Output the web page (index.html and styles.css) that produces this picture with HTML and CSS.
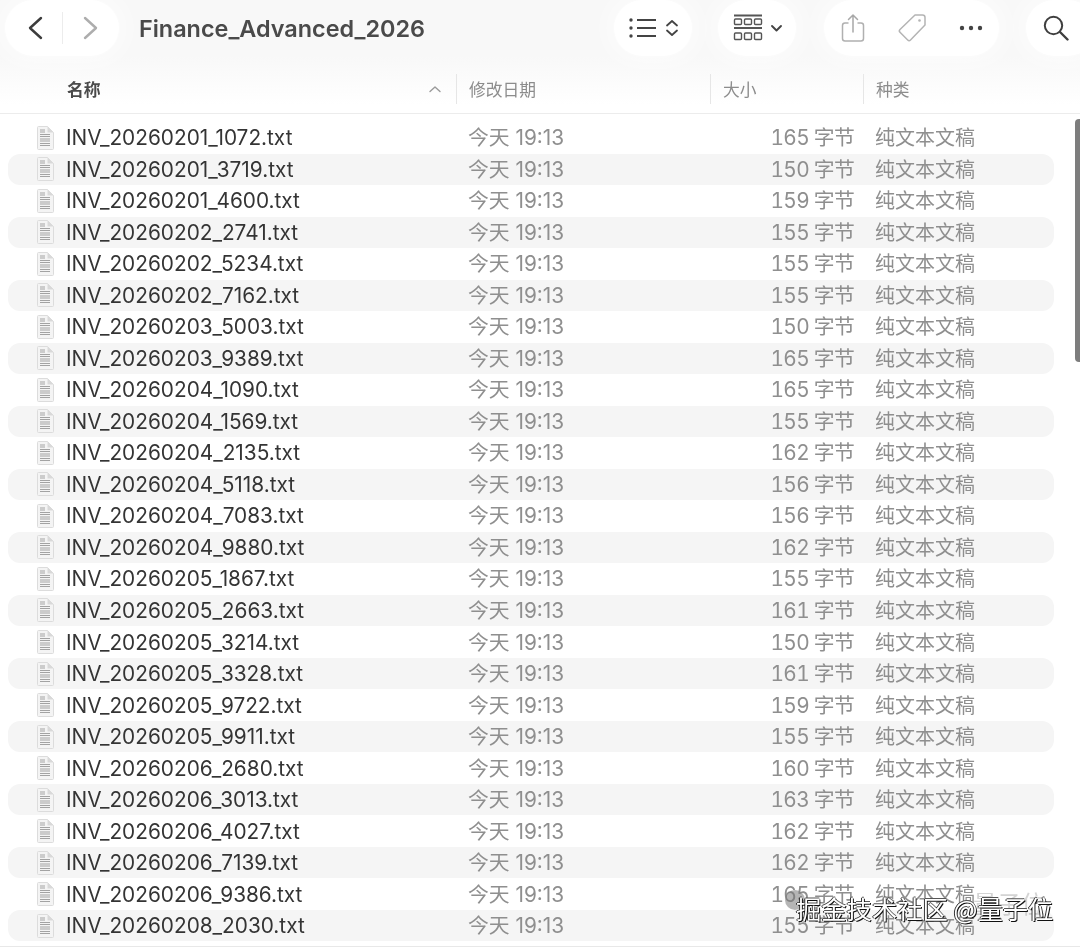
FILE: index.html
```html
<!DOCTYPE html>
<html lang="zh">
<head>
<meta charset="utf-8">
<title>Finance_Advanced_2026</title>
<link rel="stylesheet" href="styles.css">
</head>
<body>
<svg class="defs" width="0" height="0" aria-hidden="true">
  <symbol id="doc" viewBox="0 0 18 24">
    <path d="M1.5 1.5A1 1 0 0 1 2.5.5H11.5L17.5 6.5V22.5A1 1 0 0 1 16.5 23.5H2.5A1 1 0 0 1 1.5 22.5Z" fill="#f4f4f4" stroke="#dcdcdc"/>
    <path d="M11.5.5V6.5H17.5Z" fill="#d9d9d9"/>
    <path d="M4 4h5M4 6h5M4 8.5h10M4 10.5h10M4 13h10M4 15h10M4 17.500h10M4 19.500h10" stroke="#a3a3a3" stroke-width="1.200" fill="none"/>
  </symbol>
</svg>
<div class="window">
  <header class="toolbar">
    <div class="pill nav">
      <svg class="ico" width="18" height="26" viewBox="0 0 18 26"><path d="M15 3 4 13l11 10" fill="none" stroke="#3c3c3c" stroke-width="2.400" stroke-linecap="round" stroke-linejoin="round"/></svg>
      <span class="nav-div"></span>
      <svg class="ico" width="18" height="26" viewBox="0 0 18 26"><path d="M3 3l11 10L3 23" fill="none" stroke="#adadad" stroke-width="2.400" stroke-linecap="round" stroke-linejoin="round"/></svg>
    </div>
    <h1 class="title">Finance_Advanced_2026</h1>
    <div class="pill view">
      <svg class="ico" width="28" height="20" viewBox="0 0 28 20"><g fill="#444"><circle cx="2" cy="2" r="1.700"/><circle cx="2" cy="10" r="1.700"/><circle cx="2" cy="18" r="1.700"/></g><path d="M8 2h19M8 10h19M8 18h19" stroke="#444" stroke-width="1.800"/></svg>
      <svg class="ico" width="14" height="18" viewBox="0 0 14 18"><path d="M2 6.500 7 2l5 4.500M2 11.500 7 16l5-4.500" fill="none" stroke="#444" stroke-width="1.800" stroke-linecap="round" stroke-linejoin="round"/></svg>
    </div>
    <div class="pill group">
      <svg class="ico" width="30" height="28" viewBox="0 0 30 28"><path d="M1 1.500h28M1 14h28" stroke="#555" stroke-width="1.800"/><g fill="none" stroke="#555" stroke-width="1.400"><rect x="1.500" y="5" width="7" height="5.500" rx="1"/><rect x="11.500" y="5" width="7" height="5.500" rx="1"/><rect x="21.500" y="5" width="7" height="5.500" rx="1"/><rect x="1.500" y="19" width="7" height="6.500" rx="1"/><rect x="11.500" y="19" width="7" height="6.500" rx="1"/><rect x="21.500" y="19" width="7" height="6.500" rx="1"/></g></svg>
      <svg class="ico" width="13" height="9" viewBox="0 0 13 9"><path d="M2 2l4.500 4.500L11 2" fill="none" stroke="#444" stroke-width="1.900" stroke-linecap="round" stroke-linejoin="round"/></svg>
    </div>
    <div class="pill actions">
      <svg class="ico" width="24" height="30" viewBox="0 0 24 30"><path d="M7.500 10H4a2.500 2.500 0 0 0-2.500 2.500v13A2.500 2.500 0 0 0 4 28h16a2.500 2.500 0 0 0 2.500-2.500v-13A2.500 2.500 0 0 0 20 10h-3.500" fill="none" stroke="#b0b0b0" stroke-width="1.500"/><path d="M12 19V2M7.500 6.500 12 2l4.500 4.500" fill="none" stroke="#a8a8a8" stroke-width="1.500" stroke-linecap="round" stroke-linejoin="round"/></svg>
      <svg class="ico" width="30" height="30" viewBox="0 0 30 30"><path d="M18 2h7.500A2.500 2.500 0 0 1 28 4.500V12L13.500 27a2 2 0 0 1-2.800 0L3 19.300a2 2 0 0 1 0-2.800Z" fill="none" stroke="#b4b4b4" stroke-width="1.500" stroke-linejoin="round"/><circle cx="22.500" cy="7.500" r="1.300" fill="#b4b4b4"/></svg>
      <svg class="ico" width="24" height="6" viewBox="0 0 24 6"><g fill="#444"><circle cx="3" cy="3" r="2.200"/><circle cx="12" cy="3" r="2.200"/><circle cx="21" cy="3" r="2.200"/></g></svg>
    </div>
    <div class="pill search">
      <svg class="ico" width="26" height="26" viewBox="0 0 26 26"><circle cx="10.500" cy="10.500" r="8.700" fill="none" stroke="#3f3f3f" stroke-width="2"/><path d="M17 17l7.500 7.500" stroke="#3f3f3f" stroke-width="2.400" stroke-linecap="round"/></svg>
    </div>
  </header>
  <div class="cols">
    <div class="col col-name"><span>名称</span>
      <svg class="ico" width="14" height="8" viewBox="0 0 14 8"><path d="M2 6.500 7 2l5 4.500" fill="none" stroke="#9a9a9a" stroke-width="1.400" stroke-linecap="round" stroke-linejoin="round"/></svg>
    </div>
    <div class="col col-date">修改日期</div>
    <div class="col col-size">大小</div>
    <div class="col col-kind">种类</div>
  </div>
  <main class="list">
    <div class="row"><svg class="doc"><use href="#doc"/></svg><span class="name">INV_20260201_1072.txt</span><span class="date">今天 19:13</span><span class="size">165 字节</span><span class="kind">纯文本文稿</span></div>
    <div class="row"><svg class="doc"><use href="#doc"/></svg><span class="name">INV_20260201_3719.txt</span><span class="date">今天 19:13</span><span class="size">150 字节</span><span class="kind">纯文本文稿</span></div>
    <div class="row"><svg class="doc"><use href="#doc"/></svg><span class="name">INV_20260201_4600.txt</span><span class="date">今天 19:13</span><span class="size">159 字节</span><span class="kind">纯文本文稿</span></div>
    <div class="row"><svg class="doc"><use href="#doc"/></svg><span class="name">INV_20260202_2741.txt</span><span class="date">今天 19:13</span><span class="size">155 字节</span><span class="kind">纯文本文稿</span></div>
    <div class="row"><svg class="doc"><use href="#doc"/></svg><span class="name">INV_20260202_5234.txt</span><span class="date">今天 19:13</span><span class="size">155 字节</span><span class="kind">纯文本文稿</span></div>
    <div class="row"><svg class="doc"><use href="#doc"/></svg><span class="name">INV_20260202_7162.txt</span><span class="date">今天 19:13</span><span class="size">155 字节</span><span class="kind">纯文本文稿</span></div>
    <div class="row"><svg class="doc"><use href="#doc"/></svg><span class="name">INV_20260203_5003.txt</span><span class="date">今天 19:13</span><span class="size">150 字节</span><span class="kind">纯文本文稿</span></div>
    <div class="row"><svg class="doc"><use href="#doc"/></svg><span class="name">INV_20260203_9389.txt</span><span class="date">今天 19:13</span><span class="size">165 字节</span><span class="kind">纯文本文稿</span></div>
    <div class="row"><svg class="doc"><use href="#doc"/></svg><span class="name">INV_20260204_1090.txt</span><span class="date">今天 19:13</span><span class="size">165 字节</span><span class="kind">纯文本文稿</span></div>
    <div class="row"><svg class="doc"><use href="#doc"/></svg><span class="name">INV_20260204_1569.txt</span><span class="date">今天 19:13</span><span class="size">155 字节</span><span class="kind">纯文本文稿</span></div>
    <div class="row"><svg class="doc"><use href="#doc"/></svg><span class="name">INV_20260204_2135.txt</span><span class="date">今天 19:13</span><span class="size">162 字节</span><span class="kind">纯文本文稿</span></div>
    <div class="row"><svg class="doc"><use href="#doc"/></svg><span class="name">INV_20260204_5118.txt</span><span class="date">今天 19:13</span><span class="size">156 字节</span><span class="kind">纯文本文稿</span></div>
    <div class="row"><svg class="doc"><use href="#doc"/></svg><span class="name">INV_20260204_7083.txt</span><span class="date">今天 19:13</span><span class="size">156 字节</span><span class="kind">纯文本文稿</span></div>
    <div class="row"><svg class="doc"><use href="#doc"/></svg><span class="name">INV_20260204_9880.txt</span><span class="date">今天 19:13</span><span class="size">162 字节</span><span class="kind">纯文本文稿</span></div>
    <div class="row"><svg class="doc"><use href="#doc"/></svg><span class="name">INV_20260205_1867.txt</span><span class="date">今天 19:13</span><span class="size">155 字节</span><span class="kind">纯文本文稿</span></div>
    <div class="row"><svg class="doc"><use href="#doc"/></svg><span class="name">INV_20260205_2663.txt</span><span class="date">今天 19:13</span><span class="size">161 字节</span><span class="kind">纯文本文稿</span></div>
    <div class="row"><svg class="doc"><use href="#doc"/></svg><span class="name">INV_20260205_3214.txt</span><span class="date">今天 19:13</span><span class="size">150 字节</span><span class="kind">纯文本文稿</span></div>
    <div class="row"><svg class="doc"><use href="#doc"/></svg><span class="name">INV_20260205_3328.txt</span><span class="date">今天 19:13</span><span class="size">161 字节</span><span class="kind">纯文本文稿</span></div>
    <div class="row"><svg class="doc"><use href="#doc"/></svg><span class="name">INV_20260205_9722.txt</span><span class="date">今天 19:13</span><span class="size">159 字节</span><span class="kind">纯文本文稿</span></div>
    <div class="row"><svg class="doc"><use href="#doc"/></svg><span class="name">INV_20260205_9911.txt</span><span class="date">今天 19:13</span><span class="size">155 字节</span><span class="kind">纯文本文稿</span></div>
    <div class="row"><svg class="doc"><use href="#doc"/></svg><span class="name">INV_20260206_2680.txt</span><span class="date">今天 19:13</span><span class="size">160 字节</span><span class="kind">纯文本文稿</span></div>
    <div class="row"><svg class="doc"><use href="#doc"/></svg><span class="name">INV_20260206_3013.txt</span><span class="date">今天 19:13</span><span class="size">163 字节</span><span class="kind">纯文本文稿</span></div>
    <div class="row"><svg class="doc"><use href="#doc"/></svg><span class="name">INV_20260206_4027.txt</span><span class="date">今天 19:13</span><span class="size">162 字节</span><span class="kind">纯文本文稿</span></div>
    <div class="row"><svg class="doc"><use href="#doc"/></svg><span class="name">INV_20260206_7139.txt</span><span class="date">今天 19:13</span><span class="size">162 字节</span><span class="kind">纯文本文稿</span></div>
    <div class="row"><svg class="doc"><use href="#doc"/></svg><span class="name">INV_20260206_9386.txt</span><span class="date">今天 19:13</span><span class="size">165 字节</span><span class="kind">纯文本文稿</span></div>
    <div class="row"><svg class="doc"><use href="#doc"/></svg><span class="name">INV_20260208_2030.txt</span><span class="date">今天 19:13</span><span class="size">155 字节</span><span class="kind">纯文本文稿</span></div>
  </main>
  <div class="scrollbar"></div>
  <div class="wm-back"><span class="wm-bubble"></span><span class="wm-faint">量子位</span></div>
  <div class="watermark">掘金技术社区 @量子位</div>
</div>
</body>
</html>
```
FILE: styles.css
```css
* { box-sizing: border-box; }
html, body { margin: 0; height: 100%; background: #fff; }
body { overflow: hidden; font-family: Inter, "Noto Sans CJK SC", sans-serif; }
.defs { position: absolute; }
.window { position: relative; width: 1080px; height: 949px; overflow: hidden; background: #fff; filter: blur(0.4px); }

.toolbar { height: 56px; display: flex; align-items: center; padding-left: 5px; background: #f8f8f8; position: relative; z-index: 1; }
.pill { height: 56px; background: #fff; border-radius: 28px; display: flex; align-items: center; box-shadow: 0 0 22px 8px rgba(255,255,255,.55); flex: none; }
.ico { display: block; flex: none; }
.nav { width: 114px; padding-left: 21px; }
.nav-div { width: 1px; height: 32px; background: #ececec; margin: 0 19px 0 18px; }
.title { flex: none; width: 475px; margin: 0 0 0 20px; font-size: 23.400px; font-weight: 600; color: #4a4a4a; }
.view { width: 78px; padding-left: 15px; gap: 8px; }
.group { width: 78px; margin-left: 26px; padding-left: 15px; gap: 7px; }
.actions { width: 175px; margin-left: 28px; padding-left: 17px; gap: 32px; }
.search { width: 70px; margin-left: 27px; padding-left: 17px; }

.cols { height: 58px; padding-top: 9px; display: flex; align-items: center; background: linear-gradient(#f8f8f8, #fff 85%); border-bottom: 1.500px solid #ececec; font-size: 16.800px; }
.col { height: 30px; display: flex; align-items: center; color: #8c8c8c; border-left: 1px solid #e6e6e6; padding-left: 12px; flex: none; }
.col-name { width: 456px; border-left: 0; padding: 0 14px 0 67px; justify-content: space-between; font-weight: 700; color: #4a4a4a; }
.col-date { width: 254px; }
.col-size { width: 153px; }
.col-kind { flex: 1; }

.list { height: 833px; padding: 8px 26px 0 8px; border-bottom: 1.500px solid #e8e8e8; }
.row { height: 31.520px; display: grid; grid-template-columns: 18px 414px 120px 287px auto; align-items: center; padding-left: 28px; border-radius: 12px; font-size: 20.800px; color: #8f8f8f; white-space: nowrap; }
.row:nth-child(even) { background: #f5f5f5; }
.doc { width: 18px; height: 24px; }
.name { color: #343434; padding-left: 12px; }
.date { margin-top: -3px; }
.size { margin-top: -3px; text-align: right; padding-right: 21px; font-variant-numeric: tabular-nums; letter-spacing: -0.700px; word-spacing: 0; }
.kind { margin-top: -2px; font-size: 20px; }

.scrollbar { position: absolute; top: 119px; right: 0; width: 5px; height: 243px; background: #7d7d7d; border-radius: 4px 0 0 4px; }
.wm-back { position: absolute; top: 885px; left: 783px; width: 270px; height: 30px; }
.wm-bubble { position: absolute; left: 2px; top: 5px; width: 20px; height: 20px; border-radius: 50%; background: rgba(120,120,120,.55); }
.wm-faint { position: absolute; right: 8px; top: 0; font-size: 24px; color: rgba(160,160,160,.45); font-family: "Noto Sans CJK SC", sans-serif; }
.watermark { position: absolute; top: 892px; left: 796px; font-family: "Noto Sans CJK SC", sans-serif; font-size: 25.300px; line-height: 32px; color: #fff; text-shadow: 1px 1px 0 #111, -1px 0 0 #333, 0 -1px 0 #555; white-space: nowrap; }
```
